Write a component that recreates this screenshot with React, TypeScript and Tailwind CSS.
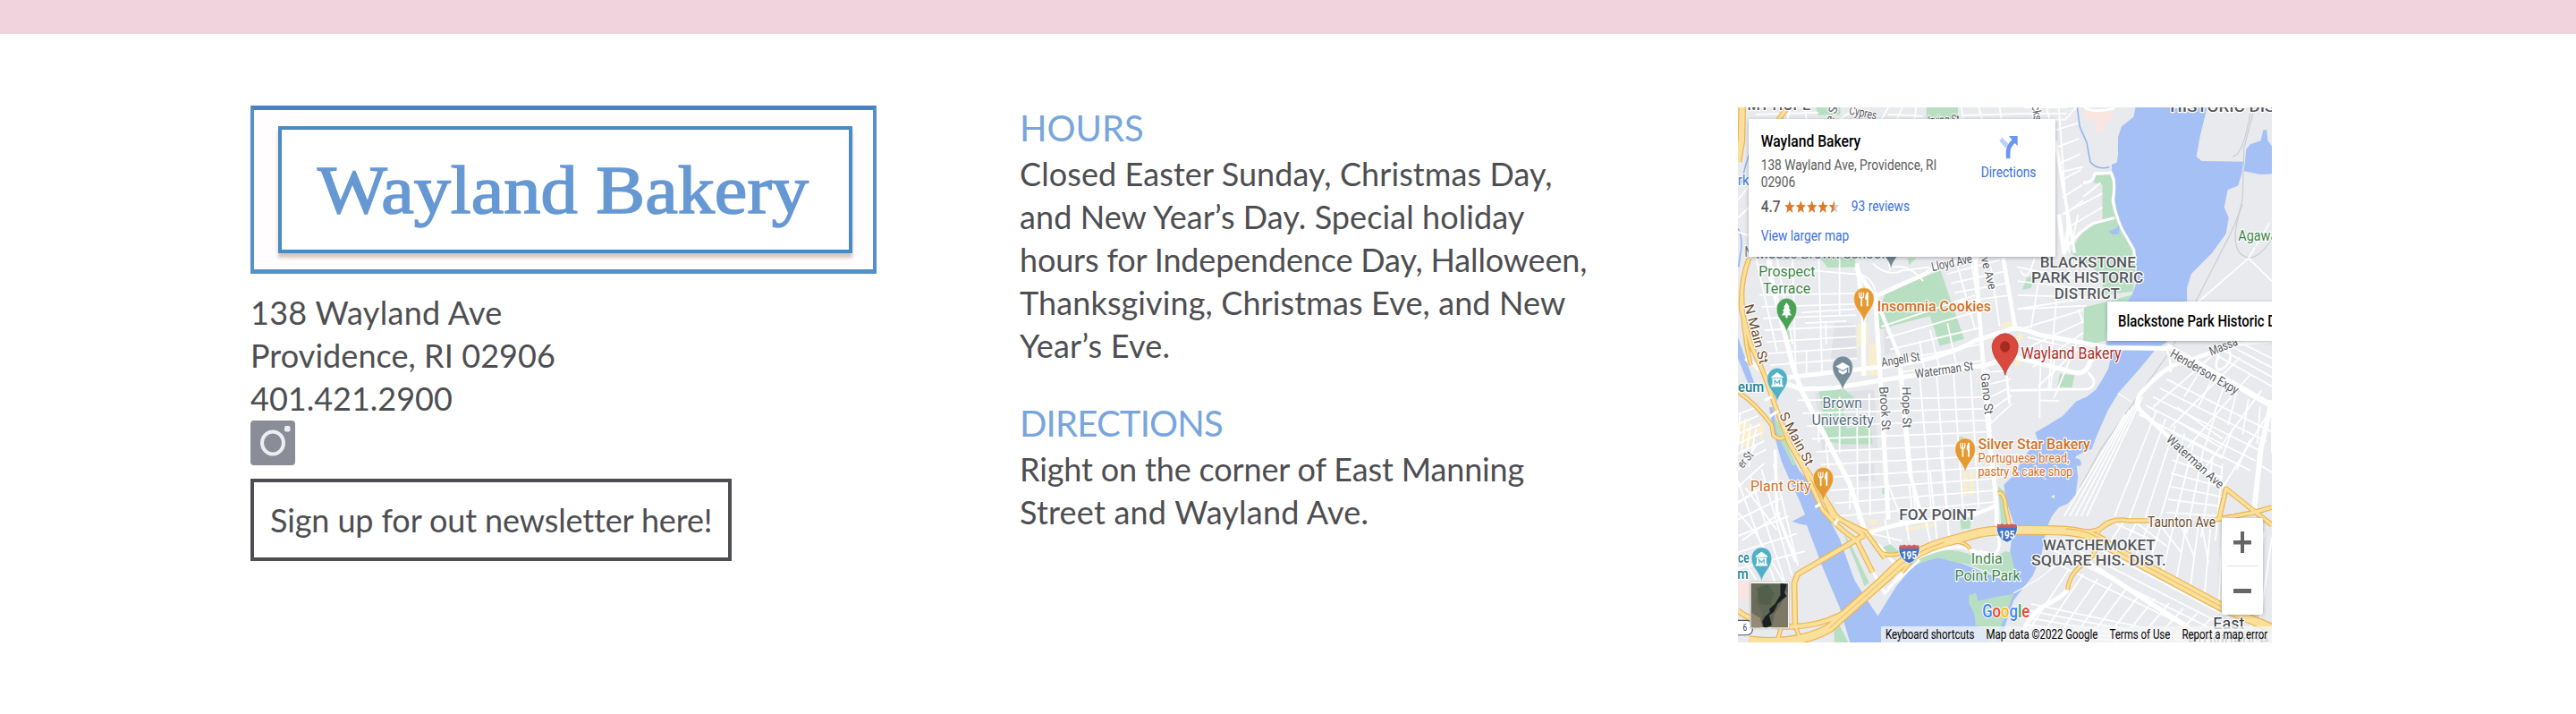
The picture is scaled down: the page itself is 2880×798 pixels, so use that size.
import { ReactNode } from "react";

type Pt = [number, number];

/* Evenly spaced streets running from edge a-b to edge c-d of a block. */
function rungs(a: Pt, b: Pt, c: Pt, d: Pt, n: number): string {
  let out = "";
  for (let i = 0; i <= n; i++) {
    const t = i / n;
    const x1 = a[0] + (b[0] - a[0]) * t;
    const y1 = a[1] + (b[1] - a[1]) * t;
    const x2 = c[0] + (d[0] - c[0]) * t;
    const y2 = c[1] + (d[1] - c[1]) * t;
    out += `M${x1.toFixed(1)},${y1.toFixed(1)}L${x2.toFixed(1)},${y2.toFixed(1)}`;
  }
  return out;
}

const minor: string[] = [
  // West bank
  rungs([8, 1060], [8, 1340], [60, 990], [200, 1290], 6),
  rungs([8, 1090], [110, 1040], [130, 1420], [180, 1330], 3),
  "M8,1180 L60,1240 L140,1380 M8,1290 L60,1370 M30,1110 L120,1230 M8,1150 L110,1090 M20,1260 L130,1180",
  rungs([8, 900], [8, 1040], [60, 880], [90, 1000], 5),
  rungs([14, 900], [60, 940], [8, 990], [40, 1050], 3),
  "M8,340 L40,310 M8,380 L38,390 M8,290 L38,250",
  // College Hill
  rungs([70, 560], [100, 760], [345, 555], [350, 740], 6),
  "M165,455 L175,800 M240,455 L250,790 M300,455 L300,620 M100,480 L345,500 M190,610 L345,600 M200,640 L320,634",
  "M205,720 L205,790 M260,640 L262,700 M60,455 L120,720 M120,455 L165,700",
  "M345,500 Q395,500 405,560 M395,470 Q440,510 480,490 L560,480 M450,480 Q500,470 540,520 M440,455 L445,490",
  // Fox Point
  rungs([180, 860], [300, 1190], [735, 850], [745, 1150], 9),
  rungs([480, 780], [725, 770], [520, 1200], [745, 1160], 5),
  "M300,850 L300,1010 M350,860 L352,1200 M385,840 L388,1190 M240,890 L240,980 M260,985 L270,1060",
  "M330,1090 L330,1170 M440,1100 L475,1190 M500,1100 L510,1190 M590,1000 L615,1250 M560,1060 L580,1260",
  "M400,1230 L740,1170 M390,1240 L480,1260 M430,1200 L445,1270 M490,1200 L500,1260 M545,1190 L560,1260",
  // East Side
  rungs([420, 650], [470, 780], [690, 560], [720, 745], 4),
  rungs([610, 500], [640, 580], [760, 460], [790, 560], 3),
  "M640,480 L690,660 M680,470 L705,640 M560,660 L590,780 M610,640 L640,780 M530,690 L545,780 M735,480 L760,650",
  rungs([715, 780], [730, 930], [790, 775], [795, 870], 4),
  rungs([810, 600], [870, 820], [1000, 570], [1000, 700], 4),
  rungs([810, 480], [815, 600], [1010, 520], [1010, 590], 3),
  "M870,530 L850,655 M930,500 L900,830 M985,600 L1000,640 M840,680 L1000,720 M800,740 L880,760 L960,780",
  "M880,700 L875,830 M920,720 L905,830 M820,490 Q840,530 860,455",
  "M875,830 L875,910 M875,860 L930,862 M915,855 L980,700",
  // North-east corner of the card
  rungs([920, 90], [945, 330], [985, 70], [1000, 290], 5),
  rungs([830, 25], [840, 60], [955, 25], [950, 60], 2),
  "M930,25 L960,440 M860,25 L870,60 M895,25 L903,60 M948,60 L980,25 M985,330 L970,400 M930,210 L1000,195 M940,330 L1055,270 M960,365 L1055,310 M1000,280 L1050,240",
  "M160,25 L150,60 M200,25 L205,60 M350,25 L300,60 M440,25 L420,60 M480,25 L465,60 M520,25 L515,60 M650,25 L655,60 M700,25 L710,60 M760,25 L765,60 M60,45 L240,40 M440,45 L540,50 M650,48 L850,42",
  // East Providence
  rungs([1200, 880], [1400, 1110], [1420, 690], [1542, 880], 4),
  rungs([1240, 800], [1160, 900], [1542, 950], [1480, 1060], 4),
  rungs([1170, 850], [1120, 900], [1010, 1190], [945, 1190], 4),
  rungs([1210, 890], [1400, 1040], [1090, 1190], [1380, 1260], 7),
  rungs([1270, 880], [1240, 1180], [1400, 970], [1400, 1190], 8),
  rungs([1340, 770], [1542, 900], [1290, 850], [1542, 1010], 6),
  rungs([1380, 730], [1440, 690], [1542, 820], [1542, 740], 3),
  rungs([1090, 1210], [1400, 1200], [1200, 1260], [1400, 1340], 5),
  rungs([1120, 1200], [1400, 1230], [1060, 1290], [1390, 1430], 8),
  rungs([870, 1300], [1000, 1260], [1380, 1545], [1420, 1480], 3),
  rungs([960, 1340], [1370, 1480], [840, 1520], [1300, 1545], 10),
  rungs([850, 1440], [840, 1520], [1350, 1545], [1100, 1545], 4),
  rungs([1430, 1180], [1542, 1250], [1400, 1400], [1500, 1545], 5),
  "M1380,900 L1350,990 M1430,940 L1400,1020 M1480,970 L1440,1060 M1500,1040 L1542,1065",
];

const majors: [string, number][] = [
  ["M95,400 L100,500 L165,760 L190,830 L330,1100 L375,1240", 14],
  ["M30,740 L110,800 L190,790 L460,760 Q600,740 690,690 L800,655 Q830,655 870,672 L1070,710 L1240,712", 13],
  ["M110,800 L190,828 L280,825 L470,795 L720,760 L800,735 L980,782 Q1010,785 1020,750 L1050,715", 13],
  ["M350,470 L368,600 L370,790", 13],
  ["M395,560 L402,560 L420,840 L440,1200", 13],
  ["M345,480 L400,565 L545,500 Q580,470 700,455", 12],
  ["M412,590 L470,730 L485,900 L500,1060 L535,1190", 11],
  ["M690,455 L705,660 L725,920 L750,1140 L752,1230", 12],
  ["M770,455 L805,655 M930,330 L945,440 L960,360", 12],
  ["M780,790 L788,870 M790,832 L1010,828 Q1035,825 1030,800 L1015,780", 7],
  ["M920,120 L975,440", 9],
  ["M945,440 Q970,390 1030,355 L1090,340 M1000,240 Q1030,240 1033,214 L1080,212 Q1095,240 1085,290 Q1090,320 1110,370 L1145,430 L1150,470", 8],
  ["M1240,705 L1542,875", 17],
  ["M1542,690 L1440,700 L1260,760 Q1220,780 1165,840 Q1145,870 1165,890 L1230,950 L1410,1110", 12],
  ["M1240,712 Q1255,760 1250,780 M1410,700 Q1440,745 1400,770 Q1370,780 1390,730", 7],
  ["M1542,860 L1510,1000 L1490,1180", 15],
  ["M1010,1320 L1360,1545", 14],
  ["M955,1400 Q940,1420 880,1450 Q830,1490 820,1545", 13],
  ["M115,1000 L120,1180 L175,1320", 9],
  ["M375,1240 L480,1210 L690,1185 L750,1160", 11],
  ["M380,1320 L430,1410 L480,1350 M480,1350 L410,1270", 9],
  ["M520,1310 Q600,1270 660,1280 Q720,1300 730,1320", 10],
  ["M750,1230 Q770,1280 745,1300 L700,1290", 8],
];

const highways: [string, number][] = [
  ["M20,25 L18,120 L8,180", 18],
  ["M150,25 L125,60", 12],
  ["M40,455 Q15,520 18,600 L45,700 L85,790 L120,890 L160,990 L240,1110 L290,1190 L370,1245", 11],
  ["M20,540 Q20,660 45,760 M8,835 Q60,870 105,930 L110,960 Q130,975 140,965", 9],
  ["M150,970 L200,1060 L250,1170 Q300,1230 350,1260", 11],
  ["M240,1110 L280,1190 L375,1235 L430,1310", 11],
  ["M370,1245 L180,1355 L170,1380 L172,1500", 13],
  ["M350,1260 L395,1350", 12],
  ["M8,1460 Q80,1510 165,1505 Q280,1500 350,1440 L450,1340 Q500,1290 590,1265", 13],
  ["M40,1545 Q180,1560 270,1510 Q360,1430 440,1360 Q510,1290 600,1265 L700,1238 Q760,1225 950,1232 Q1040,1240 1080,1280 L1250,1370 L1400,1450 L1542,1510", 24],
  ["M410,1285 Q430,1310 480,1295", 9],
  ["M480,1350 L520,1300", 9],
  ["M755,1125 Q775,1120 778,1170 L790,1225", 9],
  ["M600,1265 Q660,1255 675,1285", 7],
  ["M980,1232 Q1040,1240 1060,1215 Q1090,1195 1130,1203 L1190,1203", 10],
  ["M955,1400 Q960,1350 1010,1320 Q1050,1290 1030,1240", 9],
  ["M1040,1240 Q1050,1220 1100,1200", 7],
  ["M1390,1200 L1410,1112 L1490,1175 L1542,1215 M1380,1200 L1490,1180 L1542,1165", 11],
  ["M172,1500 L190,1550 M140,1480 L120,1550", 9],
];

function T(props: {
  x: number; y: number; w?: number; s: number; c: string; r?: number;
  anchor?: "start" | "middle"; bold?: boolean; halo?: number; children: string;
}) {
  const { x, y, w, s, c, r, anchor = "start", bold, halo = 6, children } = props;
  return (
    <text
      x={x} y={y} fontSize={s} fill={c} textAnchor={anchor}
      textLength={w} lengthAdjust="spacingAndGlyphs"
      fontWeight={bold ? 500 : 400}
      stroke="#fff" strokeWidth={halo} strokeLinejoin="round" paintOrder="stroke"
      transform={r ? `rotate(${r} ${x} ${y})` : undefined}
    >
      {children}
    </text>
  );
}

/* Teardrop marker whose tip sits on (x, y). */
function Pin({ x, y, color, children }: { x: number; y: number; color: string; children?: ReactNode }) {
  return (
    <g transform={`translate(${x} ${y})`}>
      <path
        d="M0,0 C-4,-28 -29,-38 -29,-67 A29,31 0 0 1 29,-67 C29,-38 4,-28 0,0Z"
        fill={color} stroke="#fff" strokeOpacity=".55" strokeWidth="2"
      />
      {children}
    </g>
  );
}

const Fork = () => (
  <g fill="none" stroke="#fff" strokeLinecap="round">
    <path d="M-13,-84 V-74 Q-13,-69 -7,-69 Q-1,-69 -1,-74 V-84 M-7,-84 V-70" strokeWidth="3" />
    <path d="M-7,-70 V-47" strokeWidth="4.5" />
    <path d="M10,-83 V-47" strokeWidth="5" />
    <path d="M10,-83 Q4,-80 5,-65 L10,-64Z" fill="#fff" strokeWidth="2" />
  </g>
);

const Museum = () => (
  <g>
    <path d="M0,-86 L17,-73 V-70 H-17 V-73Z M-14,-68 H14 V-50 H17 V-45 H-17 V-50 H-14Z" fill="#fff" />
    <path d="M-7,-51 V-63 L0,-55 L7,-63 V-51" fill="none" stroke="#4fb0c6" strokeWidth="3" />
  </g>
);

function Shield({ x, y }: { x: number; y: number }) {
  return (
    <g transform={`translate(${x} ${y})`}>
      <path d="M-27,-26 Q-20,-22 -14,-27 Q-6,-21 0,-27 Q6,-21 14,-27 Q20,-22 27,-26 Q32,-16 29,-6 Q24,18 0,27 Q-24,18 -29,-6 Q-32,-16 -27,-26Z" fill="#4374c4" stroke="#fff" strokeWidth="2" />
      <path d="M-27,-26 Q-20,-22 -14,-27 Q-6,-21 0,-27 Q6,-21 14,-27 Q20,-22 27,-26 L29,-15 H-29Z" fill="#cf5b5b" />
      <text x="0" y="15" textAnchor="middle" fontSize="31" fontWeight="700" fill="#fff" textLength="44" lengthAdjust="spacingAndGlyphs">195</text>
    </g>
  );
}

function MapCanvas() {
  return (
    <svg className="block h-full w-full font-['Roboto',sans-serif]" viewBox="8 25 1534 1525" preserveAspectRatio="none">
      <rect x="8" y="25" width="1534" height="1525" fill="#e8eaed" />

      {/* Built-up blocks */}
      <g fill="#dfe1e6">
        <path d="M285,640 L345,640 L350,740 L275,745Z M230,840 L400,830 L410,1000 L250,1000Z M425,600 L470,720 L430,730Z M350,1040 H400 V1090 H350Z" />
      </g>
      <g fill="#fbe5e1">
        <path d="M1003,28 L1085,30 L1085,62 L1063,66 L1060,95 L1037,95 L1035,66 L1003,55Z M8,1385 L40,1370 V1420 L8,1432Z" />
      </g>

      {/* Parks */}
      <g fill="#b9dfc3">
        <path d="M232,25 H302 V46 L238,48Z M550,25 H640 V60 H550Z" />
        <path d="M245,455 H345 V480 L265,482Z M495,455 H520 L500,475Z" />
        <path d="M435,550 L590,490 L635,620 L658,685 L588,705 L560,620 L415,655 L405,620Z" />
        <path d="M415,658 L560,618 L540,580 L450,560Z" />
        <path d="M140,630 H158 V688 H142Z M28,640 L55,655 L50,725 L24,700Z" />
        <path d="M240,835 L310,825 L345,855 L310,870 L320,940 L390,930 L395,985 L310,985 L255,975 L250,880Z" />
        <path d="M1033,214 L1080,212 Q1095,240 1085,290 L1145,430 L1150,500 L1142,550 L1060,560 L1050,500 L965,440 Q985,375 1055,345 L1055,245 L1030,240Z" />
        <path d="M1003,595 L1140,560 L1105,605 L1070,650 L1065,690 L1000,705Z" />
        <path d="M932,784 L975,788 L968,824 L926,822Z M838,510 L860,505 L850,540 L825,545Z" />
        <path d="M640,965 L655,963 L660,1000 L640,995Z M423,1110 H442 V1127 H423Z M645,1200 L680,1170 L675,1225 L650,1228Z" />
        <path d="M755,1105 L775,1120 L790,1210 L765,1218Z" />
        <path d="M408,1285 L445,1270 L470,1290 L440,1310 L420,1300Z" />
        <path d="M495,1330 Q600,1270 660,1295 L740,1315 L775,1290 L803,1297 L803,1345 L770,1365 L660,1325 L560,1325 L500,1345Z" />
      </g>

      {/* Commercial strips */}
      <g fill="#f9efcf">
        <path d="M352,640 H382 V705 H350Z M385,700 H410 V790 H385Z M360,750 H380 V790 H358Z" />
        <path d="M765,640 L800,635 L802,648 L765,655Z M812,668 L830,672 L820,700 L808,690Z M806,735 L822,742 L815,762 L800,758Z" />
        <path d="M655,1065 H668 V1132 H655Z M673,1060 H686 V1132 H673Z" />
        <path d="M380,1225 L480,1208 L480,1220 L385,1238Z M490,1222 L580,1208 V1218 L490,1234Z M385,1200 L408,1197 V1212 L388,1216Z" />
        <path d="M8,925 L35,915 L60,960 L35,1000 L8,975Z M65,920 L85,925 L80,975 L62,950Z" />
      </g>

      {/* Water */}
      <g fill="#a4c0f5">
        <path d="M1150,25 L1145,52 L1110,80 L1100,110 L1100,160 L1097,182 L1082,188 L1082,205 L1092,230 L1091,290 L1098,330 L1115,380 L1150,440 L1155,520 L1140,560 L1110,600 L1080,640 L1065,700 L1085,717 L1072,770 L1058,795 L1037,829 L1010,850 L980,863 L941,905 L862,952 L870,975 L830,1020 L800,1075 L772,1100 L780,1150 L800,1210 L790,1290 L803,1340 L770,1372 L660,1328 L583,1309 Q520,1325 506,1339 L463,1390 L410,1475 L381,1432 L343,1373 L300,1254 L240,1143 L215,1095 L184,1060 L150,990 L120,930 L108,880 L98,880 L110,950 L133,1033 L160,1095 L184,1143 L201,1186 L163,1205 L185,1212 L206,1216 L249,1330 L300,1449 L330,1550 H760 L800,1430 L855,1360 L880,1300 L895,1225 L910,1190 L930,1165 L955,1155 L978,1130 L985,1080 L978,1020 L1005,1005 L1024,999 L1041,956 L1071,888 L1102,837 L1163,769 L1206,717 L1241,693 L1298,600 L1298,540 L1310,500 L1370,440 L1410,385 L1418,340 L1405,310 L1415,260 L1445,248 L1455,215 L1460,180 L1340,178 L1325,165 L1335,110 L1356,25Z" />
        <path d="M1465,178 L1468,145 L1480,130 L1510,120 L1517,90 L1527,88 L1530,120 L1542,135 V215 L1510,216 L1462,207Z" />
        <path d="M978,1025 Q995,1025 994,1042 Q990,1052 980,1045Z M1073,378 L1095,370 L1105,355 L1103,385 L1085,388Z" />
        <path d="M8,680 L22,720 L55,810 L45,830 L8,740Z" />
      </g>
      <path d="M983,25 L990,80 L1010,125 L1020,180 Q1040,205 1075,195" fill="none" stroke="#8fb2f2" strokeWidth="4" />
      <path d="M40,160 Q25,200 20,240 M8,370 Q25,400 14,450 L10,480" fill="none" stroke="#8fb2f2" strokeWidth="4" />
      <path d="M672,1415 L692,1410 L697,1432 L750,1420 L800,1412 L785,1450 L745,1550 H735 L715,1510 L690,1500 Q692,1470 672,1440Z" fill="#b9dfc3" />
      <path d="M112,905 L125,925 L175,1045 L165,1045 L118,950Z M283,1480 L300,1500 L325,1550 H285Z M310,1240 L330,1265 L385,1380 L372,1390 L345,1320Z" fill="#b9dfc3" />
      <path d="M906,1135 L918,1128 L918,1140Z M885,1078 L895,1085 L890,1088Z" fill="#e8eaed" />

      {/* Railways */}
      <g fill="none" stroke="#c9ccd1" strokeWidth="3">
        <path d="M1492,25 L1462,140 L1458,280 Q1450,340 1400,430 L1250,720 L1170,830 L1050,1000 L990,1110" />
        <path d="M1458,300 Q1420,400 1450,440 Q1490,480 1542,400 M1480,40 Q1460,160 1430,165" />
        <path d="M1100,840 L1140,865 M800,1410 L870,1370 L960,1300" stroke="#fff" />
      </g>

      {/* Streets */}
      <g fill="none" stroke="#fff" strokeWidth="4.5" strokeLinejoin="round">
        {minor.map((d, i) => <path key={i} d={d} />)}
        <path d="M1330,580 L1475,455 L1542,520 M1475,455 L1535,355 M1250,640 L1330,600" />
        <path d="M1003,25 Q1030,42 1090,28" strokeWidth="7" />
        <path d="M440,1395 L530,1315 M390,1410 L450,1350" strokeWidth="7" />
        {majors.map(([d, w], i) => <path key={i} d={d} strokeWidth={w} />)}
      </g>

      {/* Highways */}
      <g fill="none" strokeLinejoin="round">
        {highways.map(([d, w], i) => <path key={i} d={d} stroke="#edb350" strokeWidth={w + 4} />)}
        {highways.map(([d, w], i) => <path key={i} d={d} stroke="#fae09a" strokeWidth={w - 2} />)}
        <path d="M270,1510 Q360,1430 440,1360 Q510,1290 600,1265 M1080,1280 L1250,1370 L1400,1450 M950,1226 Q1020,1228 1070,1270" stroke="#edb350" strokeWidth="2.5" />
      </g>
      <path d="M230,1165 L245,1155 M285,1215 L295,1198 M100,905 L125,890 M85,860 L105,850" stroke="#fff" strokeWidth="8" />

      {/* Road names */}
      <T x={326} y={44} w={80} s={36} c="#55585d" r={12}>Cypres</T>
      <T x={555} y={75} w={90} s={36} c="#55585d" r={-3}>Irving St</T>
      <T x={280} y={70} s={34} c="#55585d" r={-70}>e St</T>
      <T x={852} y={22} w={42} s={34} c="#55585d" r={80}>cks</T>
      <T x={567} y={492} w={118} s={36} c="#55585d" r={-12}>Lloyd Ave</T>
      <T x={706} y={455} w={94} s={34} c="#55585d" r={76}>ve Ave</T>
      <T x={422} y={764} w={112} s={36} c="#55585d" r={-9}>Angell St</T>
      <T x={519} y={797} w={168} s={36} c="#55585d" r={-8}>Waterman St</T>
      <T x={705} y={784} w={118} s={36} c="#55585d" r={84}>Gano St</T>
      <T x={414} y={822} w={125} s={36} c="#55585d" r={86}>Brook St</T>
      <T x={480} y={822} w={117} s={36} c="#55585d" r={89}>Hope St</T>
      <T x={26} y={590} w={174} s={38} c="#6b4a2b" r={75}>N Main St</T>
      <T x={126} y={902} w={166} s={38} c="#6b4a2b" r={62}>S Main St</T>
      <T x={22} y={1055} w={50} s={34} c="#55585d" r={-50}>er St</T>
      <T x={1247} y={734} w={220} s={36} c="#55585d" r={30}>Henderson Expy</T>
      <T x={1368} y={733} w={84} s={36} c="#55585d" r={-22}>Massa</T>
      <T x={1236} y={974} w={208} s={36} c="#55585d" r={42}>Waterman Ave</T>
      <T x={1185} y={1220} w={195} s={40} c="#6b4a2b">Taunton Ave</T>

      {/* Districts */}
      <T x={35} y={33} w={182} s={42} c="#55585d" bold>MT HOPE</T>
      <T x={1250} y={38} w={330} s={42} c="#55585d" bold>HISTORIC DIST</T>
      <T x={876} y={481} w={275} s={42} c="#55585d" bold>BLACKSTONE</T>
      <T x={851} y={526} w={322} s={42} c="#55585d" bold>PARK HISTORIC</T>
      <T x={917} y={570} w={188} s={42} c="#55585d" bold>DISTRICT</T>
      <T x={471} y={1200} w={222} s={42} c="#55585d" bold>FOX POINT</T>
      <T x={884} y={1287} w={323} s={42} c="#55585d" bold>WATCHEMOKET</T>
      <T x={851} y={1331} w={387} s={42} c="#55585d" bold>SQUARE HIS. DIST.</T>
      <T x={1373} y={1511} w={90} s={47} c="#33363a">East</T>
      <T x={1300} y={1560} w={232} s={47} c="#5f6368">Providence</T>

      {/* Parks and campuses */}
      <T x={68} y={508} w={162} s={42} c="#3d8549">Prospect</T>
      <T x={80} y={556} w={137} s={42} c="#3d8549">Terrace</T>
      <T x={678} y={1326} w={90} s={43} c="#3d8549">India</T>
      <T x={631} y={1374} w={188} s={43} c="#3d8549">Point Park</T>
      <T x={1445} y={404} w={113} s={43} c="#3d8549">Agawa</T>
      <T x={251} y={882} w={114} s={43} c="#56707f">Brown</T>
      <T x={220} y={930} w={178} s={43} c="#56707f">University</T>
      <T x={8} y={246} w={32} s={43} c="#4078dc">rk</T>
      <T x={27} y={452} w={22} s={43} c="#56707f">N</T>
      <T x={60} y={455} w={370} s={43} c="#56707f">Moses Brown School</T>
      <T x={8} y={836} w={75} s={43} c="#23808f" bold>eum</T>
      <T x={8} y={1322} w={32} s={43} c="#23808f" bold>ce</T>
      <T x={6} y={1370} w={32} s={43} c="#23808f" bold>m</T>

      {/* Businesses */}
      <T x={408} y={606} w={327} s={43} c="#cf7126" bold>Insomnia Cookies</T>
      <T x={698} y={999} w={322} s={43} c="#cf7126" bold>Silver Star Bakery</T>
      <T x={698} y={1038} w={262} s={37} c="#cf7126">Portuguese bread,</T>
      <T x={698} y={1076} w={272} s={37} c="#cf7126">pastry &amp; cake shop</T>
      <T x={44} y={1119} w={174} s={43} c="#cf7126">Plant City</T>
      <T x={821} y={742} w={288} s={45} c="#b02d26">Wayland Bakery</T>

      {/* Pins */}
      <Pin x={448} y={485} color="#6f8791" />
      <Pin x={370} y={637} color="#e59a31"><Fork /></Pin>
      <Pin x={661} y={1066} color="#e59a31"><Fork /></Pin>
      <Pin x={253} y={1149} color="#e59a31"><Fork /></Pin>
      <Pin x={148} y={667} color="#4ba257">
        <path d="M0,-86 L9,-72 H5 L12,-61 H7 L14,-49 H3 V-42 H-3 V-49 H-14 L-7,-61 H-12 L-5,-72 H-9Z" fill="#fff" />
      </Pin>
      <Pin x={309} y={832} color="#768c99">
        <path d="M0,-80 L20,-69 L0,-57 L-20,-69Z M-12,-61 L0,-54 L12,-61 V-52 L0,-45 L-12,-52Z M16,-67 H19 V-50 H16Z" fill="#fff" />
      </Pin>
      <Pin x={121} y={866} color="#4fb0c6"><Museum /></Pin>
      <Pin x={76} y={1377} color="#4fb0c6"><Museum /></Pin>
      <path d="M776,788 C768,755 738,745 738,704 A38,41 0 0 1 813,704 C813,745 783,755 776,788Z" fill="#d9493d" stroke="#bd3a30" strokeWidth="2" />
      <ellipse cx="775.500" cy="707" rx="14" ry="16" fill="#a52a21" />

      <Shield x={781} y={1238} />
      <Shield x={500} y={1298} />
      <rect x="-6" y="1487" width="56" height="42" rx="16" fill="#fff" stroke="#55585d" strokeWidth="3" />
      <text x="22" y="1516" fontSize="28" fill="#33363a" textLength="12" lengthAdjust="spacingAndGlyphs">6</text>

      {/* Satellite thumbnail */}
      <rect x="42" y="1377" width="114" height="134" rx="4" fill="#fff" stroke="#0003" strokeWidth="2" />
      <rect x="46" y="1382" width="106" height="125" fill="#5f6755" />
      <path d="M46,1382 H75 L60,1430 L80,1470 L70,1507 H46Z" fill="#6b6c5a" />
      <path d="M62,1395 L95,1385 L112,1410 L100,1445 L70,1440Z" fill="#52604b" />
      <path d="M135,1400 L152,1410 V1507 H105 L112,1470 L135,1435Z" fill="#7d7767" />
      <path d="M46,1465 L72,1480 L78,1507 H46Z" fill="#948972" />
      <path d="M130,1382 L148,1384 L142,1408 L148,1418 L122,1440 L112,1462 L98,1473 L105,1500 L92,1507 L82,1507 L78,1490 L86,1476 L100,1464 L98,1455 L115,1440 L130,1415Z" fill="#1a1f22" />

      {/* Wordmark */}
      <text x="710" y="1478" fontSize="50" fontWeight="500" stroke="#fff" strokeWidth="5" paintOrder="stroke" textLength="136" lengthAdjust="spacingAndGlyphs">
        <tspan fill="#4285f4">G</tspan><tspan fill="#ea4335">o</tspan><tspan fill="#fbbc05">o</tspan><tspan fill="#4285f4">g</tspan><tspan fill="#34a853">l</tspan><tspan fill="#ea4335">e</tspan>
      </text>
    </svg>
  );
}

const star = "M6.500,0 L8.400,5 L13,5.200 L9.400,8.600 L10.700,14 L6.500,11 L2.300,14 L3.600,8.600 L0,5.200 L4.600,5Z";

function Stars() {
  return (
    <svg className="h-[14px] w-[72px]" viewBox="0 0 72 14" preserveAspectRatio="none">
      {[0, 14.5, 29, 43.5].map((x) => <path key={x} d={star} transform={`translate(${x} 0)`} fill="#d97b2b" />)}
      <path d={star} transform="translate(58 0)" fill="#cfcfcf" />
      <path d="M6.500,0 L6.500,11 L2.300,14 L3.600,8.600 L0,5.200 L4.600,5Z" transform="translate(58 0)" fill="#d97b2b" />
    </svg>
  );
}

function InfoCard() {
  return (
    <div className="absolute top-[13px] left-[12px] h-[154px] w-[343px] rounded-[1px] bg-white shadow-[0_1px_4px_rgba(0,0,0,0.3)]">
      <div className="flex h-full w-[400px] origin-left scale-x-[0.857] justify-between pr-[25px] pl-[16px]">
        <div className="w-[240px] pt-[14px]">
          <div className="text-[18.3px] leading-[22px] font-medium text-black">Wayland Bakery</div>
          <div className="mt-[7px] w-[240px] text-[16px] leading-[18.7px] whitespace-normal text-[#5b5b5b]">138 Wayland Ave, Providence, RI 02906</div>
          <div className="mt-[6px] flex h-[24px] items-center">
            <span className="w-[31px] text-[18px] font-medium text-[#5b5b5b]">4.7</span>
            <Stars />
            <span className="ml-[15px] text-[16px] text-[#3a6fe0]">93 reviews</span>
          </div>
          <div className="mt-[11px] text-[16px] leading-[20px] text-[#3a6fe0]">View larger map</div>
        </div>
        <div className="flex flex-col items-center pt-[19px]">
          <svg className="h-[25px] w-[24px]" viewBox="0 0 52 62" preserveAspectRatio="none">
            <path d="M8,4 L0,13 L18,34 L26,22Z" fill="#bccffb" />
            <path d="M52,0 V28 L44,20 Q31,32 31,44 V62 H19 V44 Q19,26 36,10 L27,0Z" fill="#6d95f3" />
          </svg>
          <div className="mt-[6px] text-[16px] leading-[20px] text-[#3a6fe0]">Directions</div>
        </div>
      </div>
    </div>
  );
}

function MapPanel() {
  return (
    <div className="relative h-[598px] w-[597px] overflow-hidden font-['Roboto',sans-serif]">
      <MapCanvas />
      <InfoCard />
      <div className="absolute top-[217px] left-[413px] flex h-[44px] w-[190px] items-center bg-white pl-[12px] shadow-[0_1px_4px_rgba(0,0,0,0.3)]">
        <span className="origin-left scale-x-[0.825] text-[18px] font-medium whitespace-nowrap text-black">Blackstone Park Historic District</span>
      </div>
      <div className="absolute top-[459px] left-[541px] flex h-[108px] w-[46px] flex-col items-center rounded-[2px] bg-white shadow-[0_1px_4px_rgba(0,0,0,0.3)]">
        <div className="flex h-[53px] items-center">
          <svg className="h-[24px] w-[20px]" viewBox="0 0 20 24"><path d="M8,0 H12 V10 H20 V14.500 H12 V24 H8 V14.500 H0 V10 H8Z" fill="#666" /></svg>
        </div>
        <div className="h-px w-[34px] bg-[#e0e0e0]" />
        <div className="mt-[25px] h-[5px] w-[20px] bg-[#666]" />
      </div>
      <div className="absolute right-0 bottom-0 flex h-[18px] w-[437px] items-center bg-[#f5f5f5]/75">
        <div className="flex w-[534px] origin-left scale-x-[0.819] gap-[16px] pl-[6px] text-[14px] leading-[18px] whitespace-nowrap text-black">
          <span>Keyboard shortcuts</span>
          <span>Map data ©2022 Google</span>
          <span>Terms of Use</span>
          <span>Report a map error</span>
        </div>
      </div>
    </div>
  );
}

function Logo() {
  return (
    <div className="h-[188px] w-[700px] border-[4px] border-t-[5px] border-b-[5px] border-[#5590c8] border-t-[#4a80bd] bg-[#fffdfe] px-[27px] pt-[18px]">
      <div className="h-[142px] w-[642px] border-[4px] border-[#4a8ac2] bg-white shadow-[0_5px_4px_rgba(150,110,90,0.4)]">
        <svg className="block h-full w-full" viewBox="0 0 634 134">
          <text
            x="40" y="92.500" fontSize="77" fill="#6698d3" stroke="#6698d3" strokeWidth="1.600"
            textLength="549" lengthAdjust="spacingAndGlyphs" className="font-['Liberation_Serif',serif]"
          >
            Wayland Bakery
          </text>
        </svg>
      </div>
    </div>
  );
}

export default function App() {
  return (
    <div className="h-[798px] w-[2880px] overflow-hidden bg-white font-['Lato',sans-serif] text-[36px] leading-[48px] whitespace-nowrap text-[#4d4e51]">
      <div className="h-[38px] bg-[#f1d3de]" />
      <div className="flex pl-[280px]">
        <div className="w-[860px] pt-[80px]">
          <Logo />
          <div className="mt-[19px]">
            <div className="tracking-[0.29px]">138 Wayland Ave</div>
            <div className="tracking-[0.07px]">Providence, RI 02906</div>
            <div>401.421.2900</div>
          </div>
          <svg className="mt-[1px] block h-[50px] w-[50px]" viewBox="0 0 50 50">
            <rect width="50" height="50" rx="4" fill="#8a8d98" />
            <ellipse cx="25" cy="25" rx="12" ry="12.500" fill="none" stroke="#eceef1" strokeWidth="4" />
            <rect x="38" y="6" width="6.500" height="6.500" rx="2" fill="#eceef1" />
          </svg>
          <button className="mt-[15px] block h-[92px] w-[538px] border-[4px] border-[#4d4e51] pl-[18px] text-left tracking-[-0.13px]">
            Sign up for out newsletter here!
          </button>
        </div>
        <div className="w-[803px] pt-[81px]">
          <h2 className="text-[40px] text-[#78a5dc]">HOURS</h2>
          <div className="mt-[3px]">
            <div className="tracking-[0.09px]">Closed Easter Sunday, Christmas Day,</div>
            <div className="tracking-[0.08px]">and New Year’s Day. Special holiday</div>
            <div className="tracking-[-0.16px]">hours for Independence Day, Halloween,</div>
            <div className="tracking-[0.12px]">Thanksgiving, Christmas Eve, and New</div>
            <div className="tracking-[0.23px]">Year’s Eve.</div>
          </div>
          <h2 className="mt-[39px] text-[40px] tracking-[-0.81px] text-[#78a5dc]">DIRECTIONS</h2>
          <div className="mt-[3px]">
            <div className="tracking-[-0.15px]">Right on the corner of East Manning</div>
            <div className="tracking-[0.21px]">Street and Wayland Ave.</div>
          </div>
        </div>
        <div className="pt-[82px]">
          <MapPanel />
        </div>
      </div>
    </div>
  );
}
